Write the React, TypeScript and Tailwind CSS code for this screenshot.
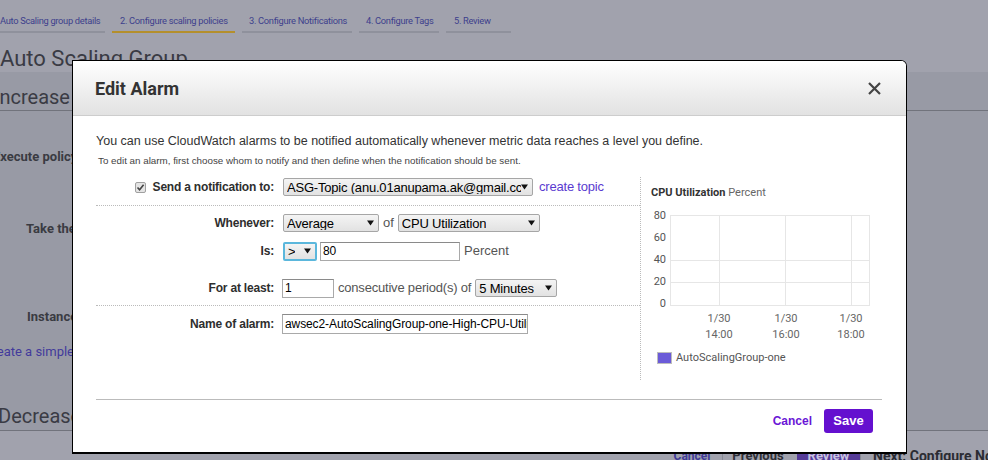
import React from "react";

const arial = { fontFamily: '"Liberation Sans", Arial, sans-serif' };

function Arrow() {
  return (
    <svg width="7" height="6" viewBox="0 0 7 6" className="shrink-0">
      <path d="M0 0.5 L7 0.5 L3.5 5.5 Z" fill="#111" />
    </svg>
  );
}

function Sel({ className, text, focus }: { className: string; text: string; focus?: boolean }) {
  return (
    <div
      className={
        "flex items-center justify-between rounded-[2px] bg-gradient-to-b from-[#f4f4f4] to-[#e2e2e2] pl-[3px] pr-[4px] text-[13px] leading-none text-black overflow-hidden whitespace-nowrap tracking-[-0.2px] " +
        (focus ? "border-2 border-[#5bb7dc] " : "border border-[#a6a6a6] ") +
        className
      }
    >
      <span className="overflow-hidden">{text}</span>
      <Arrow />
    </div>
  );
}

function Inp({ className, text }: { className: string; text: string }) {
  return (
    <div
      className={
        "flex items-center bg-white border border-[#a9a9a9] border-t-[#8a8a8a] pl-[2px] text-[12px] leading-none text-black overflow-hidden whitespace-nowrap tracking-[-0.1px] " +
        className
      }
    >
      {text}
    </div>
  );
}

function Label({ children }: { children: React.ReactNode }) {
  return (
    <div className="w-[178px] shrink-0 text-right text-[12px] font-bold text-[#2e2e2e] tracking-[-0.2px]">
      {children}
    </div>
  );
}

function Chart() {
  const yl = [
    ["80", 15],
    ["60", 37],
    ["40", 59],
    ["20", 81],
    ["0", 103],
  ] as const;
  const xs = [78, 145, 210];
  const xl = ["14:00", "16:00", "18:00"];
  return (
    <svg width="241" height="170" viewBox="0 0 241 170" style={{ fontFamily: "Roboto, sans-serif" }}>
      <rect x="29.5" y="14.5" width="199" height="90" fill="white" stroke="#e6e6e6" />
      {[59.5, 81.5].map((y) => (
        <line key={y} x1="29" x2="229" y1={y} y2={y} stroke="#e6e6e6" />
      ))}
      {[78.5, 144.5, 210.5].map((x) => (
        <line key={x} x1={x} x2={x} y1="14" y2="105" stroke="#e6e6e6" />
      ))}
      {yl.map(([t, y]) => (
        <text key={t} x="25" y={y} fontSize="11" fill="#555" textAnchor="end" dominantBaseline="middle">
          {t}
        </text>
      ))}
      {xs.map((x, i) => (
        <g key={x}>
          <text x={x} y="118" fontSize="11" fill="#666" textAnchor="middle" dominantBaseline="middle">
            1/30
          </text>
          <text x={x} y="134" fontSize="11" fill="#666" textAnchor="middle" dominantBaseline="middle">
            {xl[i]}
          </text>
        </g>
      ))}
      <rect x="16.5" y="151.5" width="14" height="11" fill="#6b5bd8" stroke="#bdbdbd" />
      <text x="35" y="157" fontSize="11" fill="#555" dominantBaseline="middle">
        AutoScalingGroup-one
      </text>
    </svg>
  );
}

function Modal() {
  return (
    <div
      className="absolute left-[72px] top-[60px] w-[835px] h-[394px] bg-white border border-black border-b-2 rounded-tr-[6px] overflow-hidden flex flex-col"
      style={arial}
    >
      <div className="h-[55px] shrink-0 bg-gradient-to-b from-white to-[#e2e2e2] border-b border-[#cdcdcd] flex items-center justify-between pl-[22px] pr-[25px]">
        <div className="text-[18px] font-bold text-[#333]" style={{ fontFamily: "Roboto, sans-serif" }}>
          Edit Alarm
        </div>
        <svg width="13" height="13" viewBox="0 0 13 13">
          <path d="M1 1 L12 12 M12 1 L1 12" stroke="#444" strokeWidth="2.2" />
        </svg>
      </div>
      <div className="flex-1 flex flex-col pl-[23px] pr-[24px]">
        <p className="mt-[17px] text-[12.5px] leading-[16px] text-[#333]">
          You can use CloudWatch alarms to be notified automatically whenever metric data reaches a level you define.
        </p>
        <p className="mt-[6px] ml-[2px] text-[9.8px] leading-[12px] text-[#444]">
          To edit an alarm, first choose whom to notify and then define when the notification should be sent.
        </p>
        <div className="mt-[10px] flex h-[203px]">
          <div className="w-[545px] shrink-0 border-r border-dotted border-[#bbb] flex flex-col">
            <div className="h-[20px] flex items-center">
              <div className="w-[178px] shrink-0 flex items-center justify-end gap-[7px]">
                <div className="w-[11px] h-[11px] rounded-[2px] border border-[#a0a0a0] bg-[#e4e4e4] flex items-center justify-center">
                  <svg width="9" height="9" viewBox="0 0 9 9">
                    <path d="M1.5 4.5 L3.6 6.8 L7.6 1.8" stroke="#444" strokeWidth="1.6" fill="none" />
                  </svg>
                </div>
                <span className="text-[12px] font-bold text-[#2e2e2e] tracking-[-0.2px]">Send a notification to:</span>
              </div>
              <Sel className="ml-[9px] w-[250px] h-[18px]" text="ASG-Topic (anu.01anupama.ak@gmail.cc" />
              <span className="ml-[6px] text-[13px] text-[#5a3bd0] tracking-[-0.2px]">create topic</span>
            </div>
            <div className="mt-[8px] border-t border-dotted border-[#bbb]" />
            <div className="mt-[7px] h-[20px] flex items-center">
              <Label>Whenever:</Label>
              <Sel className="ml-[9px] w-[96px] h-[18px]" text="Average" />
              <span className="ml-[4px] text-[13px] text-[#555]">of</span>
              <Sel className="ml-[4px] w-[142px] h-[18px]" text="CPU Utilization" />
            </div>
            <div className="mt-[8px] h-[20px] flex items-center">
              <Label>Is:</Label>
              <Sel className="ml-[9px] w-[34px] h-[19px]" text=">" focus />
              <Inp className="ml-[3px] w-[140px] h-[19px]" text="80" />
              <span className="ml-[4px] text-[13px] text-[#555]">Percent</span>
            </div>
            <div className="mt-[17px] h-[20px] flex items-center">
              <Label>For at least:</Label>
              <Inp className="ml-[8px] w-[52px] h-[19px]" text="1" />
              <span className="ml-[4px] text-[13px] text-[#555] tracking-[-0.2px]">consecutive period(s) of</span>
              <Sel className="ml-[4px] w-[82px] h-[18px]" text="5 Minutes" />
            </div>
            <div className="mt-[7px] border-t border-dotted border-[#bbb]" />
            <div className="mt-[8px] h-[20px] flex items-center">
              <Label>Name of alarm:</Label>
              <Inp className="ml-[8px] w-[246px] h-[20px]" text="awsec2-AutoScalingGroup-one-High-CPU-Utilization" />
            </div>
          </div>
          <div className="flex-1 flex flex-col" style={{ fontFamily: "Roboto, sans-serif" }}>
            <div className="mt-[9px] ml-[10px] text-[11px] leading-[14px] text-[#333]">
              <span className="font-bold">CPU Utilization</span> <span className="text-[#666]">Percent</span>
            </div>
            <div className="mt-[1px]">
              <Chart />
            </div>
          </div>
        </div>
        <div className="mt-[19px] border-t border-[#bbb]" />
        <div className="mt-[9px] flex items-center justify-end gap-[12px] pr-[9px]">
          <span className="text-[12px] font-bold text-[#6a16d6]">Cancel</span>
          <div className="h-[24px] w-[49px] rounded-[3px] bg-[#6410cf] flex items-center justify-center text-[13px] font-bold text-white">
            Save
          </div>
        </div>
      </div>
    </div>
  );
}

function Page() {
  const tabs = [
    { t: "Auto Scaling group details", w: "w-[105px] pl-0", line: "border-[#8f919c]" },
    { t: "2. Configure scaling policies", w: "w-[123px] pl-[8px]", line: "border-[#b48f2c]" },
    { t: "3. Configure Notifications", w: "w-[110px] pl-[7px]", line: "border-[#8f919c]" },
    { t: "4. Configure Tags", w: "w-[80px] pl-[7px]", line: "border-[#8f919c]" },
    { t: "5. Review", w: "w-[65px] pl-[8px]", line: "border-[#8f919c]" },
  ];
  return (
    <div className="w-[988px] h-[460px] overflow-hidden flex flex-col bg-[#a1a2ad]" style={{ fontFamily: "Roboto, sans-serif" }}>
      <div className="h-[72px] shrink-0 flex flex-col">
        <div className="flex gap-[7px] pt-[12px]">
          {tabs.map((x) => (
            <div
              key={x.t}
              className={"h-[21px] shrink-0 flex items-center border-b-2 pb-[1px] text-[9.3px] tracking-[-0.3px] text-[#3d3f8c] whitespace-nowrap " + x.w + " " + x.line}
            >
              {x.t}
            </div>
          ))}
        </div>
        <div className="mt-[13px] text-[22px] leading-[26px] text-[#3a3b44] whitespace-nowrap">Auto Scaling Group</div>
      </div>
      <div className="h-[359px] shrink-0 bg-[#989aa5] border-b border-[#71737c] flex flex-col">
        <div className="h-[39px] shrink-0 border-b border-[#71737c] flex items-end pb-[1px]">
          <div className="ml-[-6px] text-[20px] leading-[24px] text-[#3a3b44] whitespace-nowrap">Increase Group Size</div>
        </div>
        <div className="flex flex-col text-[13px] font-bold text-[#3a3b42]">
          <div className="mt-[38px] ml-[-7px] leading-[16px] whitespace-nowrap">Execute policy when:</div>
          <div className="mt-[56px] ml-[26px] leading-[16px] whitespace-nowrap">Take the action:</div>
          <div className="mt-[72px] ml-[27px] leading-[16px] whitespace-nowrap">Instances need:</div>
        </div>
        <div className="mt-[19px] ml-[-16px] text-[13px] leading-[16px] text-[#433a9c] whitespace-nowrap">Create a simple scaling policy</div>
        <div className="mt-[44px] ml-[-2px] text-[20px] leading-[24px] text-[#3a3b44] whitespace-nowrap">Decrease Group Size</div>
      </div>
      <div className="flex items-start pt-[15px] pl-[662px]">
        <div className="h-[20px] w-[60px] shrink-0 flex items-center justify-center text-[12px] font-bold text-[#3f3a98]">Cancel</div>
        <div className="h-[20px] w-[71px] shrink-0 border-l border-[#888a95] flex items-center justify-center text-[13px] font-bold text-[#2e2f36]">Previous</div>
        <div className="ml-[4px] h-[20px] w-[63px] shrink-0 bg-[#553b98] flex items-center justify-center text-[13px] font-bold text-[#c9c3e0]">Review</div>
        <div className="h-[20px] shrink-0 pl-[12px] border-l border-[#888a95] flex items-center text-[14px] font-bold text-[#2b2c33] whitespace-nowrap">Next: Configure Notifications</div>
      </div>
    </div>
  );
}

export default function App() {
  return (
    <div className="relative w-[988px] h-[460px] overflow-hidden">
      <Page />
      <Modal />
    </div>
  );
}
